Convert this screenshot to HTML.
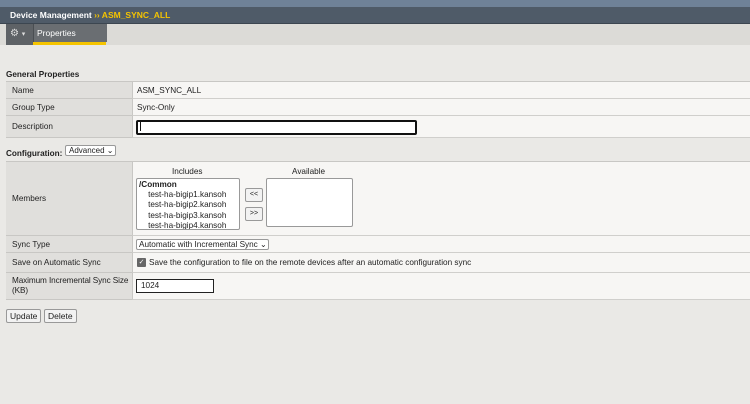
<!DOCTYPE html><html><head><style>
body{margin:0;width:750px;height:404px;background:#eae9e6;font-family:"Liberation Sans",sans-serif;font-size:8.2px;color:#222;position:relative;overflow:hidden}
.a{position:absolute}
.lab{position:absolute;left:6px;width:126px;background:#e0dfdc;border-bottom:1px solid #c8c7c4;box-sizing:border-box;padding-left:6px;display:flex;align-items:center;white-space:nowrap}
.val{position:absolute;left:132px;right:0;background:#f7f6f4;border-bottom:1px solid #d0cfcc;border-left:1px solid #c8c7c4;box-sizing:border-box;padding-left:4px;display:flex;align-items:center}
.btn{position:absolute;border:1px solid #999;background:#f2f2f2;border-radius:2px;font-size:8.5px;padding:1px 3px}
.box{position:absolute;background:#fff;border:1px solid #999;border-radius:2px}
</style></head><body>
<div class="a" style="left:0;top:0;width:750px;height:7px;background:#6f8298"></div>
<div class="a" style="left:0;top:7px;width:750px;height:16px;background:#4f5b68;border-bottom:1px solid #3c4650"></div>
<div class="a" style="left:10px;top:10px;color:#fff;font-weight:bold;font-size:8.5px">Device Management <span style="color:#f5c400">›› ASM_SYNC_ALL</span></div>
<div class="a" style="left:0;top:24px;width:750px;height:21px;background:#dcdbd7"></div>
<div class="a" style="left:6px;top:24px;width:100px;height:21px;background:#5e6266"></div>
<div class="a" style="left:33px;top:24px;width:73px;height:18px;background:#6a6e72;border-left:1px solid #4a4e52"></div>
<div class="a" style="left:33px;top:42px;width:73px;height:3px;background:#f5c400"></div>
<div class="a" style="left:10px;top:28px;color:#ddd;font-size:10px">⚙ <span style="font-size:7px">▾</span></div>
<div class="a" style="left:37px;top:28px;color:#fff;font-size:8.5px">Properties</div>
<div class="a" style="left:6px;top:70px;font-weight:bold">General Properties</div>
<div class="a" style="left:6px;top:81px;right:0;height:1px;background:#c8c7c4"></div>
<div class="lab" style="top:82px;height:17px">Name</div><div class="val" style="top:82px;height:17px">ASM_SYNC_ALL</div>
<div class="lab" style="top:99px;height:17px">Group Type</div><div class="val" style="top:99px;height:17px">Sync-Only</div>
<div class="lab" style="top:116px;height:22px">Description</div><div class="val" style="top:116px;height:22px"></div>
<div class="a" style="left:136px;top:120px;width:277px;height:11px;border:2px solid #111;border-radius:2px;background:#fff"></div>
<div class="a" style="left:140px;top:122px;width:1px;height:9px;background:#111"></div>
<div class="a" style="left:6px;top:149px;font-weight:bold">Configuration:</div>
<div class="box" style="left:65px;top:145px;width:51px;height:11px;font-size:8px;padding-left:3px;box-sizing:border-box;line-height:10px">Advanced ⌄</div>
<div class="a" style="left:6px;top:161px;right:0;height:1px;background:#c8c7c4"></div>
<div class="lab" style="top:162px;height:74px">Members</div><div class="val" style="top:162px;height:74px"></div>
<div class="a" style="left:172px;top:167px">Includes</div>
<div class="a" style="left:292px;top:167px">Available</div>
<div class="box" style="left:136px;top:178px;width:104px;height:52px;line-height:10.2px;padding:1px 2px;box-sizing:border-box;overflow:hidden"><b>/Common</b><br>&nbsp;&nbsp;&nbsp;&nbsp;test-ha-bigip1.kansoh<br>&nbsp;&nbsp;&nbsp;&nbsp;test-ha-bigip2.kansoh<br>&nbsp;&nbsp;&nbsp;&nbsp;test-ha-bigip3.kansoh<br>&nbsp;&nbsp;&nbsp;&nbsp;test-ha-bigip4.kansoh</div>
<div class="box" style="left:266px;top:178px;width:85px;height:47px"></div>
<div class="btn" style="left:245px;top:188px;font-size:7px;width:10px;height:10px;line-height:10px;text-align:center">&lt;&lt;</div>
<div class="btn" style="left:245px;top:207px;font-size:7px;width:10px;height:10px;line-height:10px;text-align:center">&gt;&gt;</div>
<div class="lab" style="top:236px;height:17px">Sync Type</div><div class="val" style="top:236px;height:17px"></div>
<div class="box" style="left:136px;top:239px;width:133px;height:11px;font-size:8.2px;padding-left:2px;box-sizing:border-box;line-height:10px">Automatic with Incremental Sync ⌄</div>
<div class="lab" style="top:253px;height:20px">Save on Automatic Sync</div><div class="val" style="top:253px;height:20px"><span style="display:inline-block;width:9px;height:9px;background:#666;color:#fff;font-size:7px;line-height:9px;text-align:center;border-radius:1px;margin-right:3px">✓</span>Save the configuration to file on the remote devices after an automatic configuration sync</div>
<div class="lab" style="top:273px;height:27px;line-height:10px;letter-spacing:-0.1px">Maximum Incremental Sync Size<br>(KB)</div><div class="val" style="top:273px;height:27px"></div>
<div class="a" style="left:136px;top:279px;width:72px;height:12px;border:1px solid #222;background:#fff;padding-left:4px;line-height:12px">1024</div>
<div class="btn" style="left:6px;top:309px">Update</div>
<div class="btn" style="left:44px;top:309px">Delete</div>
</body></html>
